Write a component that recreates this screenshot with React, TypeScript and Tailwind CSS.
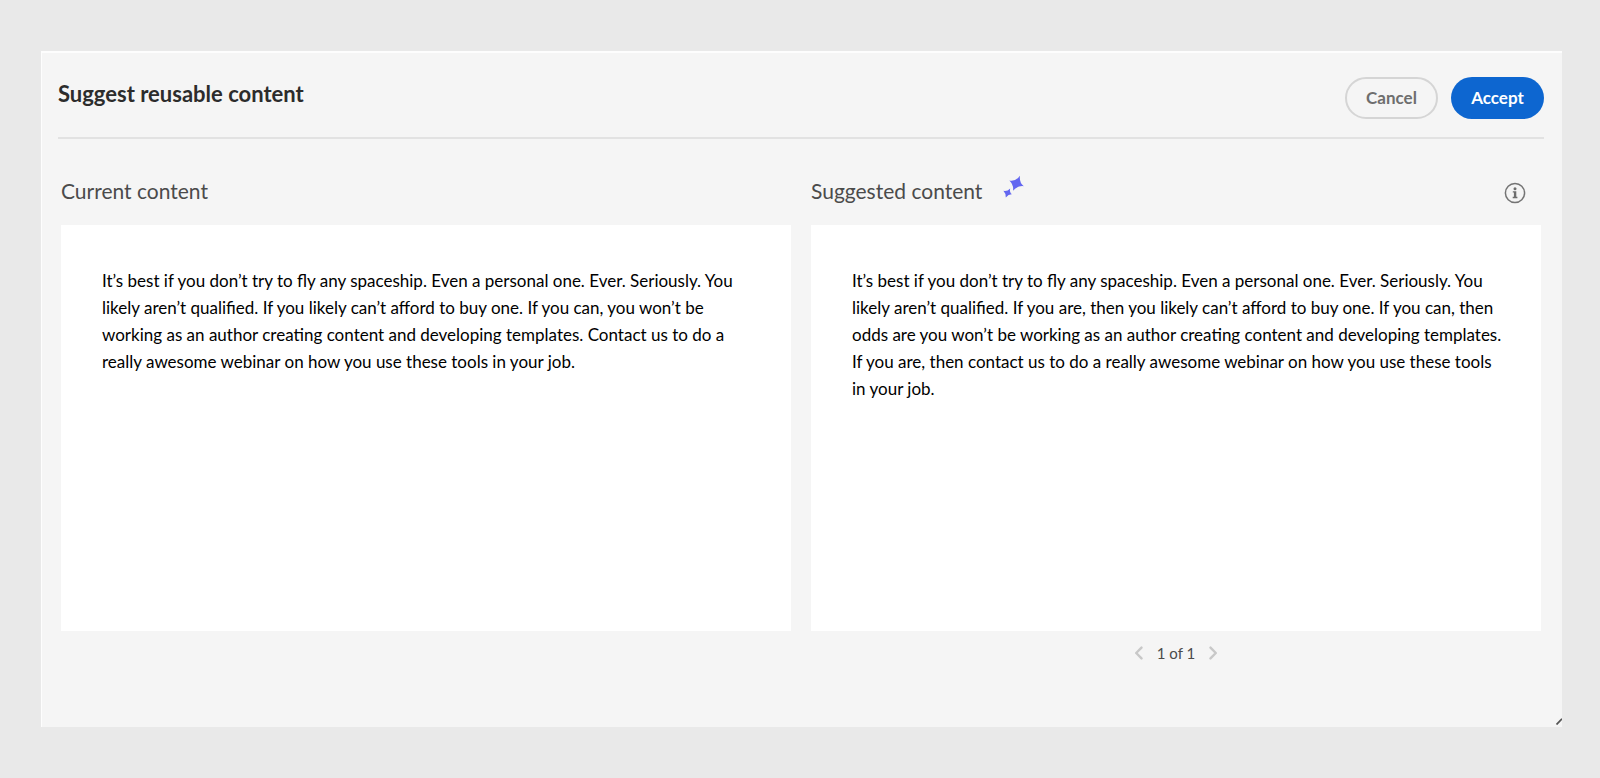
const currentLines = [
  "It’s best if you don’t try to fly any spaceship. Even a personal one. Ever. Seriously. You",
  "likely aren’t qualified. If you likely can’t afford to buy one. If you can, you won’t be",
  "working as an author creating content and developing templates. Contact us to do a",
  "really awesome webinar on how you use these tools in your job.",
];

const suggestedLines = [
  "It’s best if you don’t try to fly any spaceship. Even a personal one. Ever. Seriously. You",
  "likely aren’t qualified. If you are, then you likely can’t afford to buy one. If you can, then",
  "odds are you won’t be working as an author creating content and developing templates.",
  "If you are, then contact us to do a really awesome webinar on how you use these tools",
  "in your job.",
];

function Sparkles() {
  return (
    <svg width="22" height="24" viewBox="0 0 22 24" fill="#6367f0" aria-hidden="true">
      <path d="M17 .8 Q16 7.6 20.8 11.2 Q14.6 10.4 10 15.8 Q10.9 9.8 6.4 5.4 Q12.6 6.8 17 .8Z" />
      <path d="M7.2 13.4 Q6.2 17.2 8.9 19.2 Q5.6 19 2.8 22.6 Q3.2 18.8 .4 15.8 Q4.2 16.6 7.2 13.4Z" />
    </svg>
  );
}

function InfoIcon() {
  return (
    <svg width="22" height="22" viewBox="0 0 22 22" fill="none" aria-hidden="true">
      <circle cx="11" cy="11" r="9.6" stroke="#747474" strokeWidth="1.5" />
      <circle cx="11" cy="6.8" r="1.5" fill="#6e6e6e" />
      <path d="M8.8 9.2h3.5v5.6h1.1v1.4H8.7v-1.4h1.2v-4.2H8.8z" fill="#6e6e6e" />
    </svg>
  );
}

function Chevron({ direction }: { direction: "left" | "right" }) {
  return (
    <svg width="10" height="14" viewBox="0 0 10 14" fill="none" stroke="#c8c8c8" strokeWidth="2.4" strokeLinecap="round" strokeLinejoin="round" aria-hidden="true">
      <path d={direction === "left" ? "M7.5 1.6 2.2 7l5.3 5.4" : "M2.5 1.6 7.8 7l-5.3 5.4"} />
    </svg>
  );
}

function ContentBox({ lines }: { lines: string[] }) {
  return (
    <div className="h-[406px] bg-white px-[41px] pt-[42px] text-[17px] leading-[27px] text-black">
      <p>
        {lines.map((line) => (
          <span key={line} className="block whitespace-nowrap">
            {line}
          </span>
        ))}
      </p>
    </div>
  );
}

export default function App() {
  return (
    <div className="min-h-screen bg-[#e9e9e9] pt-[51px] pr-[38px] pb-[51px] pl-[41px] font-['Lato','Noto_Sans',sans-serif]">
      <main className="relative border-t-2 border-l border-[#fdfdfd] bg-[#f5f5f5] pr-[18px] pb-[52px] pl-4">
        <header className="flex justify-between border-b-2 border-[#e2e2e2] pt-6 pb-[18px]">
          <h1 className="text-[22px] leading-[34px] font-bold text-[#2c2c2c]">Suggest reusable content</h1>
          <div className="flex gap-[13px]">
            <button type="button" className="h-[42px] w-[93px] rounded-full border-2 border-[#d5d5d5] text-[17px] font-bold text-[#6e6e6e]">
              Cancel
            </button>
            <button type="button" className="h-[42px] w-[93px] rounded-full bg-[#0d66d0] text-[17px] font-bold text-white">
              Accept
            </button>
          </div>
        </header>
        <div className="grid grid-cols-2 gap-5 pt-[35px] pr-[3px] pl-[3px]">
          <section>
            <h2 className="h-[51px] text-[21px] leading-[34px] text-[#4b4b4b]">Current content</h2>
            <ContentBox lines={currentLines} />
          </section>
          <section>
            <div className="flex h-[51px] items-start">
              <h2 className="text-[21px] leading-[34px] text-[#4b4b4b]">Suggested content</h2>
              <span className="ml-[21px] pt-px">
                <Sparkles />
              </span>
              <button type="button" aria-label="More information" className="mt-2 mr-[15px] ml-auto">
                <InfoIcon />
              </button>
            </div>
            <ContentBox lines={suggestedLines} />
            <nav aria-label="Suggestions" className="flex h-11 items-center justify-center gap-[13px] text-[15px] text-[#4b4b4b]">
              <button type="button" aria-label="Previous suggestion">
                <Chevron direction="left" />
              </button>
              <span>1 of 1</span>
              <button type="button" aria-label="Next suggestion">
                <Chevron direction="right" />
              </button>
            </nav>
          </section>
        </div>
        <svg className="absolute right-0 bottom-0.5" width="6" height="7" viewBox="0 0 6 7" stroke="#555" strokeWidth="1.8" aria-hidden="true">
          <path d="M.5 6.5 6 .8" />
        </svg>
      </main>
    </div>
  );
}
